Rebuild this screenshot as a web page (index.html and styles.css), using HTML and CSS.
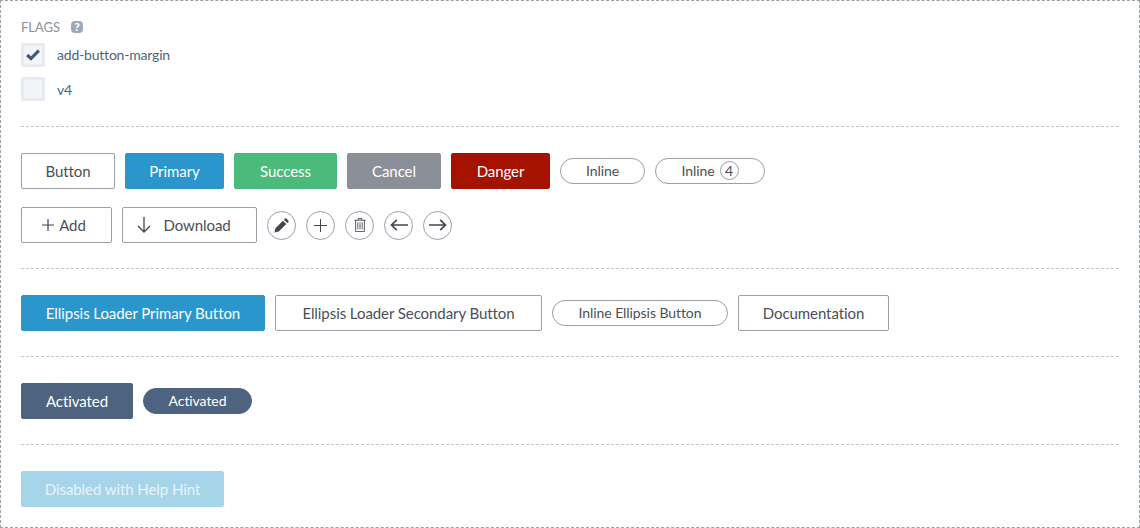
FILE: index.html
```html
<!DOCTYPE html>
<html lang="en">

<head>
    <meta charset="UTF-8">
    <title>Buttons</title>
    <link rel="stylesheet" href="styles.css">
</head>

<body>
    <div class="frame">
        <section class="section flags">
            <div class="flags-title">
                <span>FLAGS</span>
                <span class="help">?</span>
            </div>
            <label class="flag flag-first">
                <span class="box">
                    <svg width="14" height="12" viewBox="0 0 14 12"><path d="M1.2 6l3.8 3.6 7.8-8" fill="none" stroke="#42597a" stroke-width="3.2"/></svg>
                </span>
                <span class="flag-text">add-button-margin</span>
            </label>
            <label class="flag">
                <span class="box"></span>
                <span>v4</span>
            </label>
        </section>

        <section class="section">
            <div class="row">
                <button class="btn w-button">Button</button>
                <button class="btn primary w-primary">Primary</button>
                <button class="btn success w-success">Success</button>
                <button class="btn cancel w-cancel">Cancel</button>
                <button class="btn danger w-danger">Danger</button>
                <button class="btn inline w-inline">Inline</button>
                <button class="btn inline w-inline-count">Inline <span class="count">4</span></button>
            </div>
            <div class="row">
                <button class="btn w-add">
                    <svg width="12" height="12" viewBox="0 0 12 12"><path d="M6 0v12M0 6h12" stroke="#41464f" stroke-width="1.2"/></svg>
                    Add
                </button>
                <button class="btn w-download">
                    <svg width="14" height="16" viewBox="0 0 14 16"><path d="M7 0v15M1 9l6 6 6-6" fill="none" stroke="#41464f" stroke-width="1.3"/></svg>
                    Download
                </button>
                <button class="round">
                    <svg width="15" height="15" viewBox="0 0 16 16"><path d="M0.5 15.5l1-4.6 8-8 3.6 3.6-8 8zM10.6 1.8l1.2-1.2a1 1 0 0 1 1.4 0l2.2 2.2a1 1 0 0 1 0 1.4L14.2 5.4z" fill="#41464f"/></svg>
                </button>
                <button class="round">
                    <svg width="13" height="13" viewBox="0 0 13 13"><path d="M6.5 0v13M0 6.5h13" stroke="#41464f" stroke-width="1"/></svg>
                </button>
                <button class="round">
                    <svg width="12" height="14" viewBox="0 0 13 16"><path d="M0 2.5h13M4.5 2.5V.6h4v1.9M1.5 2.5v13h10v-13M4 5v8M6.5 5v8M9 5v8" fill="none" stroke="#41464f" stroke-width="1"/></svg>
                </button>
                <button class="round">
                    <svg width="18" height="12" viewBox="0 0 18 12"><path d="M18 6H1.5M6.8.8L1.5 6l5.3 5.2" fill="none" stroke="#41464f" stroke-width="1.7"/></svg>
                </button>
                <button class="round">
                    <svg width="18" height="12" viewBox="0 0 18 12"><path d="M0 6h16.5M11.2.8L16.5 6l-5.3 5.2" fill="none" stroke="#41464f" stroke-width="1.7"/></svg>
                </button>
            </div>
        </section>

        <section class="section">
            <div class="row">
                <button class="btn primary w-ellipsis-primary">Ellipsis Loader Primary Button</button>
                <button class="btn w-ellipsis-secondary">Ellipsis Loader Secondary Button</button>
                <button class="btn inline w-ellipsis-inline">Inline Ellipsis Button</button>
                <button class="btn w-docs">Documentation</button>
            </div>
        </section>

        <section class="section">
            <div class="row">
                <button class="btn activated w-activated">Activated</button>
                <button class="btn inline activated w-activated-inline">Activated</button>
            </div>
        </section>

        <section class="section last">
            <div class="row">
                <button class="btn disabled w-disabled">Disabled with Help Hint</button>
            </div>
        </section>
    </div>
</body>

</html>
```
FILE: styles.css
```css
* {
    box-sizing: border-box;
}

body {
    margin: 0;
    font-family: "Lato", sans-serif;
    color: #41464f;
}

.frame {
    width: 1140px;
    height: 528px;
    border: 1px dashed #9a9ea6;
}

.section {
    margin: 0 20px;
    padding: 26px 0 25px;
    border-bottom: 1px dashed #c4c6ca;
}

.section.last {
    border-bottom: none;
    padding-bottom: 0;
}

.flags {
    height: 126px;
    padding: 17px 0 0;
}

.flags-title {
    display: flex;
    align-items: center;
    gap: 11px;
    height: 18px;
    font-size: 13px;
    color: #8d9299;
}

.help {
    width: 12px;
    height: 12px;
    border-radius: 4px;
    background: #9daabb;
    color: #fff;
    font-size: 12px;
    font-weight: 900;
    line-height: 12px;
    text-align: center;
}

.flag {
    display: flex;
    align-items: center;
    gap: 12px;
    height: 24px;
    margin-bottom: 10px;
    font-size: 14px;
    letter-spacing: -0.2px;
    color: #4d637f;
}

.flag-first {
    margin-top: 7px;
}

.flag-text {
    margin-bottom: 2px;
}

.box {
    display: flex;
    align-items: center;
    justify-content: center;
    width: 24px;
    height: 24px;
    border: 3px solid #e7ebef;
    border-radius: 2px;
    background: #f1f5f8;
}

.row {
    display: flex;
    align-items: center;
    gap: 10px;
}

.row + .row {
    margin-top: 18px;
}

.btn {
    display: inline-flex;
    align-items: center;
    justify-content: center;
    gap: 5px;
    height: 36px;
    padding: 0;
    border: 1px solid #9a9ea6;
    border-radius: 2px;
    background: #fff;
    color: #4a4f58;
    font-family: inherit;
    font-size: 15px;
    letter-spacing: -0.07px;
}

.primary {
    border-color: #2b96cc;
    background: #2b96cc;
    color: #fff;
}

.success {
    border-color: #4bbb7b;
    background: #4bbb7b;
    color: #fff;
}

.cancel {
    border-color: #8b8f98;
    background: #8b8f98;
    color: #fff;
}

.danger {
    border-color: #a51200;
    background: #a51200;
    color: #fff;
}

.activated {
    border-color: #4d637f;
    background: #4d637f;
    color: #fff;
}

.disabled {
    border-color: #a6d4e9;
    background: #a6d4e9;
    color: #e9f4fa;
}

.inline {
    height: 26px;
    padding-bottom: 2px;
    border-radius: 13px;
    font-size: 14px;
}

.count {
    display: inline-flex;
    align-items: center;
    justify-content: center;
    width: 19px;
    height: 19px;
    margin-bottom: -1px;
    border: 1px solid #9a9ea6;
    border-radius: 50%;
}

.round {
    display: flex;
    align-items: center;
    justify-content: center;
    width: 29px;
    height: 29px;
    padding: 0;
    border: 1px solid #9a9ea6;
    border-radius: 50%;
    background: #fff;
}

.w-button { width: 94px; }
.w-primary { width: 99px; }
.w-success { width: 103px; }
.w-cancel { width: 94px; }
.w-danger { width: 99px; }
.w-inline { width: 85px; }
.w-inline-count { width: 110px; }
.w-add { width: 91px; padding-right: 5px; }
.w-download { width: 135px; padding-right: 11px; gap: 12px; }
.w-ellipsis-primary { width: 244px; }
.w-ellipsis-secondary { width: 267px; }
.w-ellipsis-inline { width: 176px; }
.w-docs { width: 151px; }
.w-activated { width: 112px; }
.w-activated-inline { width: 109px; }
.w-disabled { width: 203px; }
```
